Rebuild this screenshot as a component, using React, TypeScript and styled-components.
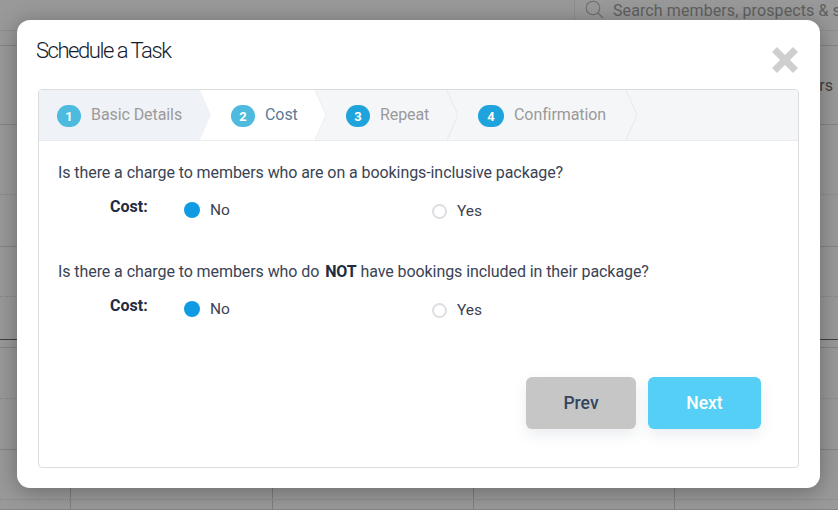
import React from "react";
import styled, { createGlobalStyle } from "styled-components";

const Global = createGlobalStyle`
  html, body { margin: 0; padding: 0; background: #999; }
  body { font-family: Roboto, "Open Sans", sans-serif; overflow: hidden; }
  * { box-sizing: border-box; }
`;

const Page = styled.div`
  position: relative;
  width: 838px;
  height: 510px;
  overflow: hidden;
  background: #999;
`;

const TopBar = styled.div`
  height: 31px;
  display: flex;
  justify-content: flex-end;
  border-bottom: 1px solid #8e8e8e;
`;

const Search = styled.div`
  width: 264px;
  display: flex;
  align-items: flex-start;
  gap: 9px;
  padding: 0 0 0 10px;
  border-left: 1px solid #8e8e8e;
  color: #606060;
  font-size: 16px;
  line-height: 20px;
  white-space: nowrap;
  overflow: hidden;
  & > svg { flex: none; }
  & > span { margin-top: 1px; letter-spacing: 0.1px; }
`;

const BackRow = styled.div<{ $h: number; $line?: "solid" | "dotted" | "dark" }>`
  height: ${(p) => p.$h}px;
  display: flex;
  align-items: center;
  justify-content: flex-end;
  padding-right: 5px;
  color: #444;
  font-size: 16px;
  border-bottom: 1px ${(p) => (p.$line === "dotted" ? "dotted" : "solid")}
    ${(p) => (p.$line === "dark" ? "#3f3f3f" : "#858585")};
`;

const GridRow = styled.div<{ $h: number; $dotted?: boolean }>`
  height: ${(p) => p.$h}px;
  display: grid;
  grid-template-columns: 71px 202px 201px 201px 1fr;
  border-bottom: 1px ${(p) => (p.$dotted ? "dotted" : "solid")} #858585;
`;

const GridCell = styled.div`
  border-right: 1px solid #7d7d7d;
  &:last-child { border-right: none; }
`;

const Modal = styled.div`
  position: absolute;
  left: 17px;
  top: 20px;
  width: 803px;
  height: 468px;
  background: #fff;
  border-radius: 13px;
  padding: 0 21px 20px;
  display: flex;
  flex-direction: column;
  box-shadow: 0 3px 22px rgba(0, 0, 0, 0.32);
`;

const Header = styled.div`
  height: 69px;
  flex: none;
  position: relative;
`;

const Title = styled.h2`
  margin: 0;
  position: absolute;
  left: -2px;
  top: 15px;
  font-size: 22px;
  line-height: 32px;
  font-weight: 300;
  letter-spacing: -1.45px;
  color: #141b2e;
  white-space: nowrap;
`;

const Close = styled.button`
  position: absolute;
  right: 1px;
  top: 27px;
  width: 26px;
  height: 26px;
  padding: 0;
  border: 0;
  background: none;
  display: block;
`;

const Panel = styled.div`
  flex: 1;
  border: 1px solid #dcdcdc;
  border-radius: 4px;
  display: flex;
  flex-direction: column;
  overflow: hidden;
`;

const Tabs = styled.div`
  height: 51px;
  flex: none;
  display: flex;
  background: #f5f6f8;
  border-bottom: 1px solid #e9ebee;
`;

const Tab = styled.div<{ $step: number; $bg: string; $first?: boolean }>`
  position: relative;
  z-index: ${(p) => 6 - p.$step};
  display: flex;
  align-items: center;
  gap: 10px;
  height: 50px;
  padding: 0 19px 0 ${(p) => (p.$first ? 18 : 31)}px;
  background: ${(p) => p.$bg};
  & > svg {
    position: absolute;
    left: 100%;
    top: 0;
  }
`;

const Badge = styled.span<{ $soft?: boolean; $wide?: boolean }>`
  width: ${(p) => (p.$wide ? 26 : 24)}px;
  height: 22px;
  margin-top: 2px;
  border-radius: 11px;
  display: flex;
  align-items: center;
  justify-content: center;
  color: #fff;
  font-size: 13px;
  font-weight: 700;
  background: ${(p) => (p.$soft ? "#4cbbdd" : "#1fa3dc")};
`;

const TabLabel = styled.span<{ $active?: boolean; $w: number }>`
  width: ${(p) => p.$w}px;
  margin-top: -2px;
  font-size: 16px;
  white-space: nowrap;
  letter-spacing: -0.08px;
  color: ${(p) => (p.$active ? "#5a7a96" : "#9a9a9a")};
`;

const Body = styled.div`
  flex: 1;
  padding: 21px 19px 0;
  display: flex;
  flex-direction: column;
`;

const Question = styled.p`
  margin: 0;
  font-size: 16px;
  line-height: 22px;
  letter-spacing: -0.08px;
  color: #3a4354;
  white-space: nowrap;
  & > strong { color: #222b3f; font-weight: 700; margin-left: 2px; }
`;

const CostRow = styled.div`
  display: flex;
  align-items: center;
  height: 46px;
  margin-bottom: 31px;
  padding-left: 52px;
`;

const CostLabel = styled.span`
  width: 74px;
  position: relative;
  top: -1px;
  font-size: 16px;
  font-weight: 700;
  color: #222b3f;
`;

const Option = styled.label<{ $low?: boolean }>`
  width: 248px;
  display: flex;
  align-items: center;
  gap: 10px;
  font-size: 15.5px;
  color: #3a4354;
  position: relative;
  top: ${(p) => (p.$low ? 4 : 3)}px;
`;

const Radio = styled.span<{ $on?: boolean }>`
  width: ${(p) => (p.$on ? 16 : 15)}px;
  height: ${(p) => (p.$on ? 16 : 15)}px;
  border-radius: 50%;
  flex: none;
  background: ${(p) => (p.$on ? "#0f9be3" : "#fff")};
  border: ${(p) => (p.$on ? "none" : "2px solid #dcdee2")};
`;

const Actions = styled.div`
  display: flex;
  justify-content: flex-end;
  gap: 12px;
  padding-right: 18px;
  margin-top: 17px;
`;

const Button = styled.button<{ $primary?: boolean }>`
  width: ${(p) => (p.$primary ? 113 : 110)}px;
  height: 52px;
  border: 0;
  border-radius: 6px;
  padding: 0;
  font-family: inherit;
  font-size: 17.5px;
  font-weight: 500;
  background: ${(p) => (p.$primary ? "#55cff5" : "#c6c6c6")};
  color: ${(p) => (p.$primary ? "#fff" : "#34455f")};
  box-shadow: 0 6px 14px rgba(60, 80, 110, 0.1);
`;

const Tip = ({ fill, stroke }: { fill: string; stroke?: string }) => (
  <svg width="11" height="50" viewBox="0 0 11 50">
    <path d="M0 0 L11 25 L0 50 Z" fill={fill} />
    {stroke && <path d="M0 0 L11 25 L0 50" fill="none" stroke={stroke} strokeWidth="1" />}
  </svg>
);

const steps = [
  { n: 1, label: "Basic Details", bg: "#eff2f6", soft: true, w: 90 },
  { n: 2, label: "Cost", bg: "#ffffff", soft: true, active: true, w: 31 },
  { n: 3, label: "Repeat", bg: "#f5f6f8", w: 48 },
  { n: 4, label: "Confirmation", bg: "#f5f6f8", w: 93, wide: true },
];

const CostChoice = () => (
  <CostRow>
    <CostLabel>Cost:</CostLabel>
    <Option>
      <Radio $on />
      No
    </Option>
    <Option $low>
      <Radio />
      Yes
    </Option>
  </CostRow>
);

export default function App() {
  return (
    <Page>
      <Global />
      <TopBar>
        <Search>
          <svg width="19" height="19" viewBox="0 0 19 19" fill="none" stroke="#6d6d6d" strokeWidth="1.1">
            <circle cx="8" cy="8" r="6.8" />
            <path d="M13 13 L18 18" />
          </svg>
          <span>Search members, prospects &amp; staff</span>
        </Search>
      </TopBar>
      <BackRow $h={15} />
      <BackRow $h={79}>Members</BackRow>
      <BackRow $h={70} $line="dotted" />
      <BackRow $h={52} />
      <BackRow $h={50} $line="dotted" />
      <BackRow $h={43} $line="dark" />
      <BackRow $h={8} />
      <GridRow $h={51} $dotted>
        {[0, 1, 2, 3, 4].map((i) => <GridCell key={i} />)}
      </GridRow>
      <GridRow $h={51}>
        {[0, 1, 2, 3, 4].map((i) => <GridCell key={i} />)}
      </GridRow>
      <GridRow $h={50} $dotted>
        {[0, 1, 2, 3, 4].map((i) => <GridCell key={i} />)}
      </GridRow>
      <GridRow $h={10}>
        {[0, 1, 2, 3, 4].map((i) => <GridCell key={i} />)}
      </GridRow>

      <Modal>
        <Header>
          <Title>Schedule a Task</Title>
          <Close aria-label="Close">
            <svg width="26" height="26" viewBox="0 0 26 26">
              <path d="M5 5 L21 21 M21 5 L5 21" stroke="#cfcfcf" strokeWidth="7" strokeLinecap="square" />
            </svg>
          </Close>
        </Header>
        <Panel>
          <Tabs>
            {steps.map((s) => (
              <Tab key={s.n} $step={s.n} $bg={s.bg} $first={s.n === 1}>
                <Badge $soft={s.soft} $wide={s.wide}>{s.n}</Badge>
                <TabLabel $active={s.active} $w={s.w}>{s.label}</TabLabel>
                <Tip fill={s.bg} stroke={s.n >= 3 ? "#e7e9ec" : s.n === 2 ? "#eceef1" : undefined} />
              </Tab>
            ))}
          </Tabs>
          <Body>
            <Question>Is there a charge to members who are on a bookings-inclusive package?</Question>
            <CostChoice />
            <Question>
              Is there a charge to members who do <strong>NOT</strong> have bookings included in their package?
            </Question>
            <CostChoice />
            <Actions>
              <Button>Prev</Button>
              <Button $primary>Next</Button>
            </Actions>
          </Body>
        </Panel>
      </Modal>
    </Page>
  );
}
